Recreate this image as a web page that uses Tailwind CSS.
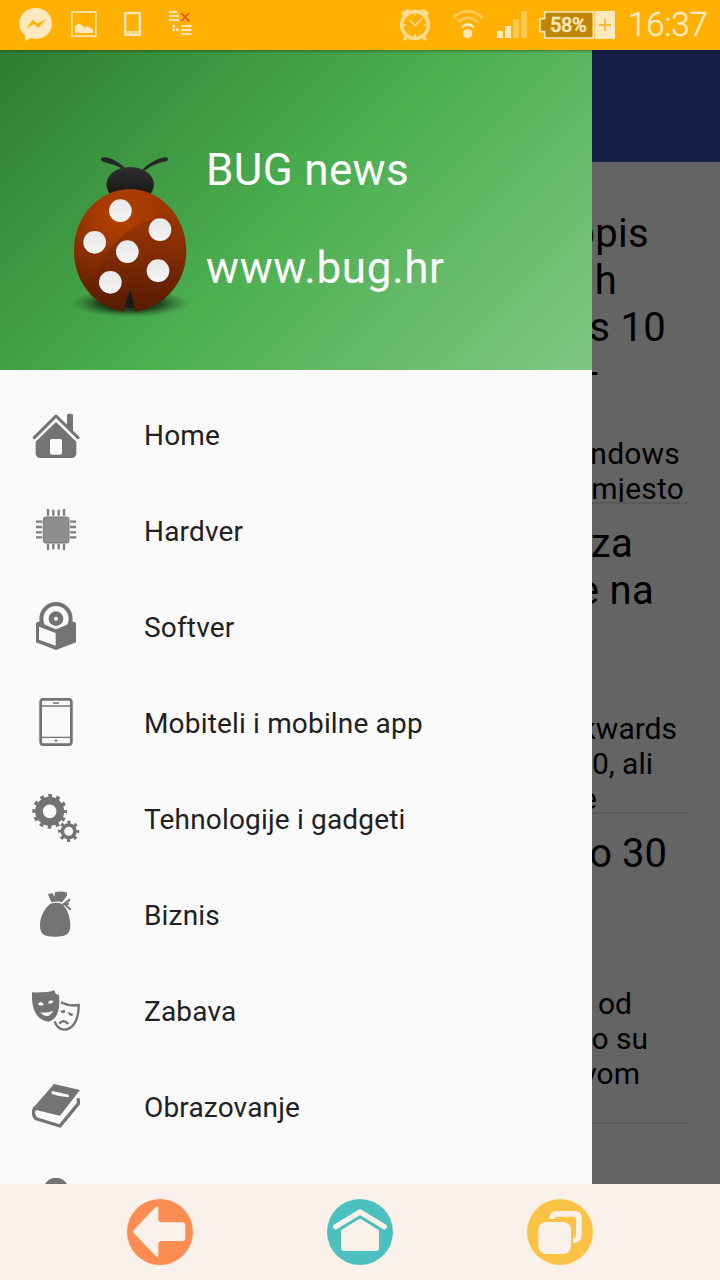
<!DOCTYPE html>
<html lang="hr">
<head>
<meta charset="utf-8">
<title>BUG news</title>
<script src="https://cdn.jsdelivr.net/npm/@tailwindcss/browser@4"></script>
</head>
<body class="font-['Roboto',sans-serif]">
<div class="relative flex h-[1280px] w-[720px] flex-col overflow-hidden bg-[#646464]">

  <!-- Status bar -->
  <header class="relative z-20 flex h-[50px] shrink-0 items-center bg-[#ffb000] shadow-[0_1px_3px_rgba(0,0,0,0.35)]">
    <svg class="h-[50px] w-[240px]" viewBox="0 0 720 150">
      <path fill="#ffe8bd" d="M107 24c28 0 49 20 49 47s-21 46-49 46c-6 0-11-1-15-2l-17 9V106C64 98 58 86 58 71c0-27 21-47 49-47z"/>
      <path fill="#ffb000" d="M77 86l22-27 13 12 26-14-23 27-13-12z"/>
      <path fill="none" stroke="#ffe3ab" stroke-width="5" d="M215.500 36.500h72v72h-72z"/>
      <path fill="#ffe8bd" d="M225 99V79l13-9 15 12 10-3 16 10v10z"/>
      <path fill="#ffe8bd" fill-rule="evenodd" d="M375 36h45q3 0 3 3v66q0 3-3 3h-45q-3 0-3-3V39q0-3 3-3zm4 7v51h37V43z"/>
      <path stroke="#ffb000" stroke-width="2.500" d="M378 99.500h10M392 99.500h11M407 99.500h10"/>
      <path stroke="#ffe8bd" stroke-width="6" d="M507 36h25M507 48h30M507 60h30M543 78h31M543 90h31M543 102h31"/>
      <path fill="#ffe8bd" d="M517 74h8v8h-8zM517 85h8v8h-8zM528 85h8v8h-8z"/>
      <path fill="none" stroke="#e8561c" stroke-width="5" d="M543 39l25 25M567 39l-24 25"/>
    </svg>
    <svg class="ml-[140px] h-[50px] w-[155px]" viewBox="0 0 465 150">
      <g fill="none" stroke="#ffdb91">
        <circle cx="105" cy="75" r="40" stroke-width="11"/>
        <path stroke-width="15" stroke-linecap="round" d="M72 41l11-6M138 41l-11-6"/>
        <path stroke-width="10" stroke-linecap="round" d="M80 109l-5 8M130 109l5 8"/>
        <path stroke-width="5" d="M88 60l17 17 22-22M105 41v8M105 102v8M71 75h8M131 75h8"/>
      </g>
      <g fill="none" stroke-width="8">
        <path stroke="#ffcb5b" d="M220 53q43-39 87 0"/>
        <path stroke="#ffcb5b" d="M233 67q30-27 61 0"/>
        <path stroke="#ffe8bd" d="M246 82q17-17 35 0"/>
      </g>
      <circle cx="263" cy="101" r="14" fill="#ffe8bd"/>
      <path fill="#ffe8bd" d="M351 93h18v21h-18zM375 78h18v36h-18z"/>
      <path fill="#ffc951" d="M399 57h18v57h-18zM423 33h18v81h-18z"/>
    </svg>
    <div class="relative ml-[4px] h-[28px] w-[76px]">
      <svg class="h-[28px] w-[76px]" viewBox="0 0 228 84">
        <path fill="#c08500" stroke="#ffe8bd" stroke-width="5" d="M17 3h146v78H17V62H3V23h14z"/>
        <rect x="167" width="61" height="84" rx="4" fill="#ffe8bd"/>
        <path stroke="#ffb931" stroke-width="6" d="M180 42h36M198 24v36"/>
      </svg>
      <span class="absolute left-[11px] top-[2px] text-[20px] leading-[24px] font-medium tracking-[-0.4px] text-[#ffe8bd] [-webkit-text-stroke:0.4px_#ffe8bd]">58%</span>
    </div>
    <span class="ml-[13px] text-[33px] font-light leading-[50px] tracking-[-0.1px] text-[#ffedcc] [-webkit-text-stroke:0.5px_#ffedcc]">16:37</span>
  </header>

  <!-- Dimmed article feed -->
  <div class="flex min-h-0 flex-1 flex-col">
    <div class="h-[112px] shrink-0 bg-[#192048]"></div>
    <main class="min-h-0 flex-1 overflow-hidden px-8 pt-8 text-right text-black">
      <article class="h-[310px] overflow-hidden border-b-2 border-[#5a5a5a] pt-4">
        <h2 class="h-[226px] text-[40px] leading-[47px] tracking-[0.3px]"><div class="pr-[39px]">opis</div><div class="pr-[71px]">h</div><div class="pr-[22px]">s 10</div><div class="pr-[87px]">–</div></h2>
        <div class="h-[66px] overflow-hidden text-[30px] leading-[35px] tracking-[0.2px]"><div class="pr-[8px]">Windows</div><div class="pr-[4px]">mjesto</div></div>
      </article>
      <article class="h-[310px] overflow-hidden border-b-2 border-[#5a5a5a] pt-4">
        <h2 class="h-[191px] text-[40px] leading-[47px] tracking-[0.3px]"><div class="pr-[55px]">za</div><div class="pr-[34px]">e na</div></h2>
        <div class="text-[30px] leading-[35px]"><div class="pr-[11px]">backwards</div><div class="pr-[35px]">10, ali</div><div class="pr-[91px]">e</div></div>
      </article>
      <article class="h-[310px] overflow-hidden border-b-2 border-[#5a5a5a] pt-4">
        <h2 class="h-[156px] text-[40px] leading-[47px]"><div class="pr-[21px]">o 30</div></h2>
        <div class="text-[30px] leading-[35px]"><div class="pr-[56px]">od</div><div class="pr-[40px]">o su</div><div class="pr-[48px]">vom</div></div>
      </article>
    </main>
  </div>

  <!-- Navigation drawer -->
  <aside class="absolute left-0 top-[50px] z-10 h-[1134px] w-[592px] overflow-hidden bg-[#fafafa]">
    <div class="flex h-[320px] bg-[linear-gradient(135deg,#2e7d32_0%,#4caf50_50%,#81c784_100%)] pl-[50px] pt-[90px]">
      <svg class="h-[190px] w-[156px] shrink-0" viewBox="0 0 468 570">
        <defs>
          <radialGradient id="shade"><stop offset="0" stop-color="#000" stop-opacity=".85"/><stop offset=".5" stop-color="#000" stop-opacity=".6"/><stop offset=".8" stop-color="#000" stop-opacity=".18"/><stop offset="1" stop-color="#000" stop-opacity="0"/></radialGradient>
          <linearGradient id="shell" x1="0" y1="0" x2="0" y2="1"><stop offset="0" stop-color="#a83b02"/><stop offset=".4" stop-color="#8d3003"/><stop offset="1" stop-color="#561b01"/></linearGradient>
          <radialGradient id="gloss" gradientUnits="userSpaceOnUse" cx="220" cy="230" r="210"><stop offset="0" stop-color="#b44000"/><stop offset=".4" stop-color="#aa3b00" stop-opacity=".75"/><stop offset="1" stop-color="#8a2d00" stop-opacity="0"/></radialGradient>
          <linearGradient id="head" x1="0" y1="0" x2="0" y2="1"><stop offset="0" stop-color="#303030"/><stop offset="1" stop-color="#171717"/></linearGradient>
          <linearGradient id="dot" x1="0" y1="0" x2="0" y2="1"><stop offset="0" stop-color="#e8e8e8"/><stop offset="1" stop-color="#f5f5f5"/></linearGradient>
        </defs>
        <ellipse cx="240" cy="490" rx="178" ry="42" fill="url(#shade)"/>
        <path fill="#262626" d="M217 87C200 74 181 72 159 65c-9-3-8-12 2-13 22-1 48 17 62 30zM277 89c20-20 47-35 69-37 10 0 11 9 2 12-22 5-42 11-63 27z"/>
        <path fill="url(#head)" d="M180 162c-20-28-8-57 18-71 26-13 59-13 84 0 31 16 38 46 20 71z"/>
        <path fill="url(#shell)" d="M240 148C334 148 409 232 409 333c0 91-60 166-153 182L240 445 221 515C132 501 72 424 72 333 72 232 146 148 240 148z"/>
        <path fill="url(#gloss)" d="M240 148c50 0 95 23 126 64C250 250 160 310 137 410c-10 30-14 46-15 60C89 434 72 385 72 333 72 232 146 148 240 148z"/>
        <path fill="#1b1b1b" d="M241 445l12 56q-14 5-29 0z"/>
        <g fill="url(#dot)"><circle cx="211" cy="212" r="34"/><circle cx="330" cy="269" r="34"/><circle cx="134" cy="307" r="34"/><circle cx="232" cy="335" r="34"/><circle cx="324" cy="392" r="34"/><circle cx="181" cy="427" r="34"/></g>
      </svg>
      <div class="flex flex-col gap-[46px] pt-[4px] text-[44px] leading-[52px] text-white"><p class="tracking-[0.35px]">BUG news</p><p class="tracking-[0.6px]">www.bug.hr</p></div>
    </div>

    <nav class="flex flex-col pt-4 text-[28px] tracking-[0.17px] text-[#212121]">
      <a class="flex h-24 shrink-0 items-center gap-16 px-8">
        <svg class="size-12 shrink-0" viewBox="36 30 144 144" fill="#737373"><path d="M141 46q0-5 5-5h8q5 0 5 5v48l-18-18z"/><path fill="none" stroke="#fafafa" stroke-width="9" d="M37 122l71-66 71 66"/><path fill="none" stroke="#737373" stroke-width="9" stroke-linecap="round" stroke-linejoin="round" d="M43 113l65-65 66 65"/><path fill-rule="evenodd" d="M108 66l61 59v34q0 15-15 15H62q-15 0-15-15v-34zM96 117q-6 0-6 6v35q0 6 6 6h24q6 0 6-6v-35q0-6-6-6z"/></svg>
        <span class="pt-1">Home</span></a>
      <a class="flex h-24 shrink-0 items-center gap-16 px-8">
        <svg class="size-12 shrink-0" viewBox="36 318 144 144"><rect x="70" y="351" width="77" height="78" rx="7" fill="#8e8e8e" stroke="#777" stroke-width="3"/><path stroke="#7e7e7e" stroke-width="7" d="M84 327v20M100 329v18M116 329v18M132 327v20M84 431v19M100 431v17M116 431v17M132 431v19M48 365h19M48 381h18M48 397h18M48 412h19M150 365h18M150 381h18M150 397h18M150 412h19"/></svg>
        <span class="pt-1">Hardver</span></a>
      <a class="flex h-24 shrink-0 items-center gap-16 px-8">
        <svg class="size-12 shrink-0" viewBox="36 36 144 144" fill="#737373"><circle cx="108" cy="86" r="44" fill="#fafafa" stroke="#737373" stroke-width="12"/><path d="M48 98l12-4 4 6 44 18 44-18 4-6 12 4v59l-60 23-60-23z"/><path fill="#fafafa" d="M57 110l50 19v38l-50-18z"/><circle cx="108" cy="86" r="14" fill="none" stroke="#737373" stroke-width="16"/></svg>
        <span class="pt-1">Softver</span></a>
      <a class="flex h-24 shrink-0 items-center gap-16 px-8">
        <svg class="size-12 shrink-0" viewBox="36 324 144 144" fill="none" stroke="#737373"><rect x="62" y="328" width="92" height="136" rx="8" stroke-width="8"/><path stroke-width="2" stroke="#999" d="M58 335v123M158 335v123"/><path stroke-width="4" d="M65 348h87M65 442h87"/><path stroke-width="5" d="M99 339h18M104 452h8"/></svg>
        <span class="pt-1">Mobiteli i mobilne app</span></a>
      <a class="flex h-24 shrink-0 items-center gap-16 px-8">
        <svg class="size-12 shrink-0" viewBox="36 42 144 144" fill="none" stroke="#737373"><circle cx="89" cy="94" r="32" stroke-width="23"/><circle cx="89" cy="94" r="46" stroke-width="12" stroke-dasharray="11 13.086" stroke-dashoffset="5.5"/><circle cx="146" cy="154" r="19" stroke-width="11"/><circle cx="146" cy="154" r="27" stroke-width="10" stroke-dasharray="9 12.206" stroke-dashoffset="4.5"/></svg>
        <span class="pt-1">Tehnologije i gadgeti</span></a>
      <a class="flex h-24 shrink-0 items-center gap-16 px-8">
        <svg class="size-12 shrink-0" viewBox="36 330 144 144" fill="#737373"><path d="M84 343q8-4 14-3l4 11 3-14q18-5 36 1l0 9-14 19q-15-4-33 1zM91 371q17-5 35 0c14 12 25 37 25 66 0 25-14 33-46 33s-45-8-45-33c0-31 16-54 31-66z"/><path stroke="#737373" stroke-width="6" fill="none" d="M129 374l21-16M133 371l19 18M139 372l8-1"/></svg>
        <span class="pt-1">Biznis</span></a>
      <a class="flex h-24 shrink-0 items-center gap-16 px-8">
        <svg class="size-12 shrink-0" viewBox="36 18 144 144" fill="#737373"><path fill="none" stroke="#737373" stroke-width="7" d="M123 67q28 13 53 8c1 42-16 74-45 74-14-2-22-10-27-25"/><path d="M121 92l14-3-1 11q-11 0-13-8zM143 96l16 5-2 7q-10 1-14-12z"/><path fill="none" stroke="#737373" stroke-width="7" d="M118 131q13-16 27 1"/><path d="M36 37q20 1 45-1 14-2 22-5l4 10 10 5c4 42-4 72-32 79-33-4-52-35-49-88z"/><path fill="#fafafa" d="M53 73q10-14 19 1-10 6-19-1zM84 69q6-13 16-5-4 11-16 5zM61 97q20 4 38-5-6 15-19 16-11 0-19-11z"/></svg>
        <span class="pt-1">Zabava</span></a>
      <a class="flex h-24 shrink-0 items-center gap-16 px-8">
        <svg class="size-12 shrink-0" viewBox="36 306 144 144"><path fill="none" stroke="#737373" stroke-width="10" stroke-linejoin="round" d="M45 382c-7 12-6 30 6 35l69 21 55-67v-16"/><path fill="#737373" d="M102 312l78 18-60 77-72-17q-6-2-7-8z"/><path fill="#fafafa" d="M98 333l48 11q3 2 0 8-28-1-50-10-4-7 2-9z"/></svg>
        <span class="pt-1">Obrazovanje</span></a>
      <a class="flex h-24 shrink-0 items-center gap-16 px-8">
        <svg class="size-12 shrink-0" viewBox="36 594 144 144"><circle cx="108" cy="630" r="37" fill="#737373"/></svg></a>
    </nav>
  </aside>

  <!-- System navigation -->
  <footer class="z-20 flex h-24 shrink-0 items-center justify-center gap-[134px] bg-[#faf2ea]">
    <svg class="size-[66px]" viewBox="51 57 198 198"><circle cx="150" cy="156" r="99" fill="#ff8c52"/><path fill="#faf2ea" d="M71 151l65-69q9-6 9 3v32q0 10 10 10h62q9 0 9 9v38q0 9-9 9h-62q-10 0-10 10v35q0 6-7 1l-67-70q-3-4 0-8z"/></svg>
    <svg class="size-[66px]" viewBox="651 57 198 198"><circle cx="750" cy="156" r="99" fill="#4bc0be"/><path fill="none" stroke="#faf2ea" stroke-width="16" stroke-linecap="round" stroke-linejoin="round" d="M677 140l73-44 73 44"/><path fill="#faf2ea" d="M746 118q4-3 8 0l53 33v54q0 8-8 8h-98q-8 0-8-8v-54z"/></svg>
    <svg class="size-[66px]" viewBox="1251 57 198 198"><circle cx="1350" cy="156" r="99" fill="#fbc345"/><rect x="1285" y="126" width="98" height="96" rx="24" fill="#faf2ea"/><path fill="#faf2ea" d="M1317 117q3-24 23-24h55q20 0 20 20v55q0 20-26 21v-13q9-2 9-11v-47q0-8-8-8h-46q-10 0-10 7z"/></svg>
  </footer>
</div>
</body>
</html>
